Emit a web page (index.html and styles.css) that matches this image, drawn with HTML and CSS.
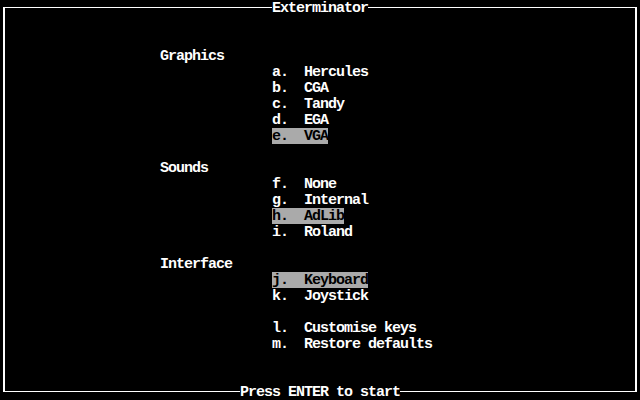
FILE: index.html
```html
<!DOCTYPE html>
<html>
<head>
<meta charset="utf-8">
<link rel="stylesheet" href="styles.css">
</head>
<body>
<div class="screen">
  <div class="frame">
    <div class="menu">
      <section class="group">
        <div class="heading">Graphics</div>
        <ul class="options">
          <li><span class="opt">a.  Hercules</span></li>
          <li><span class="opt">b.  CGA</span></li>
          <li><span class="opt">c.  Tandy</span></li>
          <li><span class="opt">d.  EGA</span></li>
          <li><span class="opt selected">e.  VGA</span></li>
        </ul>
      </section>
      <section class="group">
        <div class="heading">Sounds</div>
        <ul class="options">
          <li><span class="opt">f.  None</span></li>
          <li><span class="opt">g.  Internal</span></li>
          <li><span class="opt selected">h.  AdLib</span></li>
          <li><span class="opt">i.  Roland</span></li>
        </ul>
      </section>
      <section class="group">
        <div class="heading">Interface</div>
        <ul class="options">
          <li><span class="opt selected">j.  Keyboard</span></li>
          <li><span class="opt">k.  Joystick</span></li>
        </ul>
        <ul class="options extra">
          <li><span class="opt">l.  Customise keys</span></li>
          <li><span class="opt">m.  Restore defaults</span></li>
        </ul>
      </section>
    </div>
  </div>
  <div class="caption top"><span>Exterminator</span></div>
  <div class="caption bottom"><span>Press ENTER to start</span></div>
</div>
</body>
</html>
```
FILE: styles.css
```css
html, body {
  margin: 0;
  padding: 0;
  background: #000;
}
.screen {
  position: relative;
  width: 640px;
  height: 400px;
  background: #000;
  color: #fff;
  font-family: "Liberation Mono", "DejaVu Sans Mono", monospace;
  font-weight: bold;
  font-size: 15px;
  letter-spacing: -1px;
  line-height: 18px;
  overflow: hidden;
}
.frame {
  box-sizing: border-box;
  margin: 7px 0 0 3px;
  width: 634px;
  height: 385px;
  border-style: solid;
  border-color: #fff;
  border-width: 1px 2px 1px 2px;
  padding: 40px 0 0 155px;
}
.menu {
  display: flex;
  flex-direction: column;
  gap: 16px;
}
.heading {
  height: 16px;
  white-space: pre;
}
.options {
  list-style: none;
  margin: 0;
  padding: 0 0 0 112px;
}
.options li {
  height: 16px;
}
.extra {
  margin-top: 16px;
}
.opt {
  display: inline-block;
  height: 16px;
  vertical-align: top;
  white-space: pre;
}
.opt.selected {
  background: #aaaaaa;
  color: #000;
}
.caption {
  position: absolute;
  left: 0;
  right: 0;
  height: 16px;
  text-align: center;
  white-space: pre;
}
.caption span {
  display: inline-block;
  vertical-align: top;
  background: #000;
  height: 16px;
}
.caption.top { top: 0; }
.caption.bottom { top: 384px; }
```
